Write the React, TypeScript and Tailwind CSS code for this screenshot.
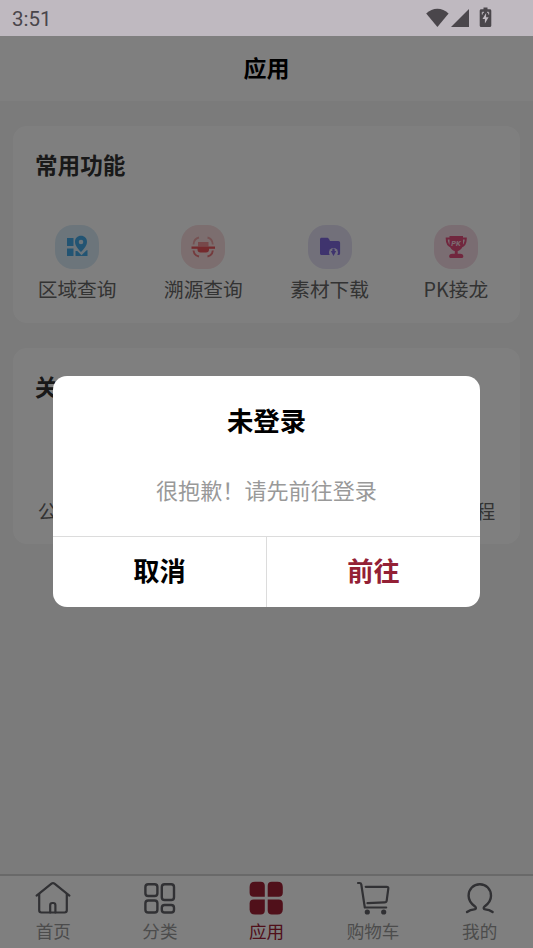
import type { ReactNode } from 'react';

interface Feature {
  label: string;
  tile: string;
  icon: ReactNode;
}

interface NavItem {
  label: string;
  icon: ReactNode;
  active?: boolean;
}

const MapIcon = () => (
  <svg className="h-11 w-11" viewBox="0 0 44 44" fill="#45a9e6">
    <path d="M12 13h6.500v8H12zM12 23.500h6.500V31H12z" />
    <path d="M20.500 26h1.800l4.200 4.200 4.800-4.600 1.200-.6V31h-12z" />
    <path
      fillRule="evenodd"
      d="M26 10.800c-3.500 0-6 2.600-6 5.900 0 4.100 3.200 7.100 6 10.400 2.800-3.300 6-6.300 6-10.400 0-3.300-2.500-5.900-6-5.900zm0 3.900a2.300 2.300 0 1 1 0 4.600 2.300 2.300 0 0 1 0-4.600z"
    />
  </svg>
);

const ScanIcon = () => (
  <svg className="h-11 w-11" viewBox="0 0 44 44" fill="none">
    <path
      d="M12.500 19.500c.3-3.600 2.300-6.300 5.500-7M26.500 12.500c3.200.7 5 3.400 5.300 7"
      stroke="#eda3a5"
      strokeWidth="1.800"
    />
    <path d="M17 17h10.500v4.500H17z" fill="#ee9194" />
    <path d="M16.500 23H28v1.500c0 2-1 3-3 3h-5.500c-2 0-3-1-3-3z" fill="#e8545b" />
    <path d="M10.500 21.500H34v2.300H10.500z" fill="#e8545b" />
    <path
      d="M12.500 25.500c.4 3.200 2.400 5.300 5.500 6M26.500 31.500c3.100-.7 5-2.800 5.300-6"
      stroke="#e8767b"
      strokeWidth="2"
    />
  </svg>
);

const FolderIcon = () => (
  <svg className="h-11 w-11" viewBox="0 0 44 44">
    <path
      d="M12 14.300c0-1 .6-1.600 1.600-1.600h5.200c1 0 1.700.4 2.200 1.300l1 1.900h8.200c1.200 0 1.900.7 1.900 1.900v10.700c0 .9-.6 1.500-1.500 1.500h-17c-1 0-1.600-.6-1.600-1.500z"
      fill="#7f69dd"
    />
    <circle cx="25.500" cy="27.500" r="4.500" fill="#e4e1f8" />
    <path
      d="M25.500 23.500c.9 0 1.200.5 1.200 1.200v1.400h1.500L25.500 31l-2.700-4.900h1.500v-1.400c0-.7.300-1.200 1.200-1.200z"
      fill="#7f69dd"
    />
  </svg>
);

const TrophyIcon = () => (
  <svg className="h-11 w-11" viewBox="0 0 44 44" fill="#e24e7d">
    <path
      d="M16.500 13.500h-3.800c0 5 1.400 7.700 5.300 8.100M28 13.500h3.800c0 5-1.400 7.700-5.300 8.100"
      fill="none"
      stroke="#e24e7d"
      strokeWidth="2"
    />
    <path d="M15.500 11h13.500v8c0 4-2.700 6.500-5.300 7v2.800h2.600c1.600 0 2.800.9 3 2.200.1 1-.4 2-1.200 2H16.400c-.8 0-1.300-1-1.200-2 .2-1.300 1.400-2.200 3-2.200h2.600V26c-2.600-.5-5.300-3-5.300-7z" />
    <text
      x="22"
      y="20.500"
      textAnchor="middle"
      fill="#f8dbe5"
      fontSize="7.500"
      fontStyle="italic"
      fontWeight="700"
      fontFamily="Roboto, sans-serif"
    >
      PK
    </text>
  </svg>
);

const HomeIcon = () => (
  <svg
    className="h-9 w-9"
    viewBox="0 0 36 36"
    fill="none"
    stroke="#626268"
    strokeWidth="2.200"
    strokeLinecap="round"
    strokeLinejoin="round"
  >
    <path d="M1.600 15.600 16.500 3.600c.9-.7 2.100-.7 3 0l14.900 12" />
    <path d="M4.200 14v16.300c0 1.500.8 2.200 2.200 2.200h23.200c1.400 0 2.200-.7 2.200-2.200V14" />
    <path d="M15.200 32.500v-7.300c0-1.400.8-2.200 2.200-2.200h.8c1.400 0 2.200.8 2.200 2.200v7.300" />
  </svg>
);

const CategoryIcon = () => (
  <svg className="h-9 w-9" viewBox="0 0 36 36" fill="none" stroke="#626268" strokeWidth="2.400">
    <rect x="3.400" y="4.200" width="12" height="11.800" rx="2.800" />
    <rect x="19.800" y="4.200" width="12.200" height="15.800" rx="2.800" />
    <rect x="3.400" y="20.500" width="12" height="12" rx="2.800" />
    <rect x="19.800" y="25" width="12.200" height="7.500" rx="2.800" />
  </svg>
);

const AppsIcon = () => (
  <svg className="h-9 w-9" viewBox="0 0 36 36" fill="#a02035">
    <path d="M7 1.700h5.800c2.600 0 4 1.400 4 4v11.100H5.600c-2.600 0-4-1.400-4-4V7c0-3.600 1.800-5.300 5.400-5.300z" />
    <path d="M29.500 1.700h-5.800c-2.600 0-4 1.400-4 4v11.100h11.100c2.600 0 4-1.400 4-4V7c0-3.600-1.800-5.300-5.300-5.300z" />
    <path d="M7 34.600h5.800c2.600 0 4-1.400 4-4V19.500H5.600c-2.600 0-4 1.400-4 4v5.800c0 3.600 1.800 5.300 5.400 5.300z" />
    <path d="M29.500 34.600h-5.800c-2.600 0-4-1.400-4-4V19.500h11.100c2.600 0 4 1.400 4 4v5.800c0 3.600-1.800 5.300-5.300 5.300z" />
  </svg>
);

const CartIcon = () => (
  <svg
    className="h-9 w-9"
    viewBox="0 0 36 36"
    fill="none"
    stroke="#626268"
    strokeWidth="2.200"
    strokeLinecap="round"
    strokeLinejoin="round"
  >
    <path d="M3 3h1.600c1 0 1.500.5 1.700 1.500L9.800 27.500h21.400" />
    <path d="M10.700 6.800h21c1.200 0 1.800.7 1.600 1.800l-1.600 12c-.2 1.200-.9 1.800-2 1.800l-17.200.8" />
    <circle cx="12.300" cy="32" r="1.500" fill="#626268" />
    <circle cx="28.700" cy="32" r="1.500" fill="#626268" />
  </svg>
);

const UserIcon = () => (
  <svg
    className="h-9 w-9"
    viewBox="0 0 36 36"
    fill="none"
    stroke="#626268"
    strokeWidth="2.400"
    strokeLinecap="round"
    strokeLinejoin="round"
  >
    <path d="M5 32c2.300-1.700 4.700-2.500 7.400-2.600 1.700-.1 2-1.900.6-3C9 23.600 6.600 20 6.600 15.700 6.600 9.200 11.400 4.200 17.800 4.200S29 9.200 29 15.700c0 4.300-2.400 7.900-6.400 10.700-1.400 1.100-1.100 2.900.6 3 2.700.1 5.100.9 7.400 2.600" />
  </svg>
);

const commonFeatures: Feature[] = [
  { label: '区域查询', tile: 'bg-[#d9ebf6]', icon: <MapIcon /> },
  { label: '溯源查询', tile: 'bg-[#f8dcde]', icon: <ScanIcon /> },
  { label: '素材下载', tile: 'bg-[#e4e1f5]', icon: <FolderIcon /> },
  { label: 'PK接龙', tile: 'bg-[#f5dae4]', icon: <TrophyIcon /> },
];

const aboutFeatures: Feature[] = [
  { label: '公司简介', tile: 'bg-[#d9ebf6]', icon: <MapIcon /> },
  { label: '使用教程', tile: 'bg-[#e4e1f5]', icon: <FolderIcon /> },
];

const navItems: NavItem[] = [
  { label: '首页', icon: <HomeIcon /> },
  { label: '分类', icon: <CategoryIcon /> },
  { label: '应用', icon: <AppsIcon />, active: true },
  { label: '购物车', icon: <CartIcon /> },
  { label: '我的', icon: <UserIcon /> },
];

function StatusBar() {
  return (
    <div className="flex h-9 shrink-0 items-center justify-between bg-[#bfb9c0] pr-[39px] pl-3 text-[#4a464b]">
      <span className="pt-[3px] font-[Roboto] text-[20.500px] leading-none">3:51</span>
      <svg className="h-9 w-[70px]" viewBox="0 0 70 36" fill="#4a464b">
        <path d="M2.200 13.600C8.500 7.200 18.300 7.200 24.600 13.600L13.400 27z" />
        <path d="M27 27 45 9v18z" />
        <path
          fillRule="evenodd"
          d="M59.500 7.500h4v1.700h2.300c.9 0 1.500.6 1.500 1.500v14.800c0 .9-.6 1.500-1.500 1.500h-8.600c-.9 0-1.500-.6-1.500-1.500V10.700c0-.9.600-1.500 1.500-1.500h2.300zm2.600 5.500-3.600 6h2.400v4.500l3.700-6.200h-2.500z"
        />
        <path d="M58.300 14.500v-2.200h1.700M64.700 14.500v-2.200H63" fill="none" stroke="#bfb9c0" />
      </svg>
    </div>
  );
}

function FeatureCard({ title, items }: { title: string; items: Feature[] }) {
  return (
    <section className="h-[196.500px] rounded-[14px] bg-white pt-[23px]">
      <h2 className="pl-[22px] text-[22.600px] leading-8 font-bold text-[#333333]">{title}</h2>
      <div className="mt-11 flex justify-between px-px">
        {items.map((item) => (
          <div key={item.label} className="flex w-1/4 flex-col items-center">
            <div className={`h-11 w-11 rounded-[18px] ${item.tile}`}>{item.icon}</div>
            <span className="mt-1.5 text-[19.700px] leading-7 text-[#666666]">{item.label}</span>
          </div>
        ))}
      </div>
    </section>
  );
}

function LoginDialog() {
  return (
    <div className="mt-[340px] flex h-[231px] w-[427px] flex-col overflow-hidden rounded-[14px] bg-white text-center">
      <h3 className="pt-[25px] text-[26.400px] leading-[38px] font-bold text-black">未登录</h3>
      <p className="mt-8 text-[22.100px] leading-9 text-[#999999]">很抱歉！请先前往登录</p>
      <div className="mt-auto flex h-[71px] border-t border-[#dcdcdc] text-[26.200px] font-bold">
        <button className="flex-1 border-r border-[#dcdcdc] pb-0.5 text-black">取消</button>
        <button className="flex-1 pb-0.5 text-[#932035]">前往</button>
      </div>
    </div>
  );
}

export default function App() {
  return (
    <div className="relative flex h-[948px] w-[533px] flex-col overflow-hidden bg-[#f6f6f6] font-['Noto_Sans_CJK_SC',sans-serif]">
      <StatusBar />
      <header className="flex h-[65px] shrink-0 items-center justify-center bg-white pb-0.5 text-[23px] font-bold text-black">
        应用
      </header>

      <main className="flex flex-1 flex-col gap-[25px] px-[13px] pt-[25px]">
        <FeatureCard title="常用功能" items={commonFeatures} />
        <FeatureCard title="关于" items={aboutFeatures} />
      </main>

      <nav className="flex h-[74px] shrink-0 border-t-2 border-[#d2d2d2] bg-white pt-1">
        {navItems.map((item) => (
          <div key={item.label} className="flex flex-1 flex-col items-center">
            {item.icon}
            <span
              className={`mt-[3px] text-[17.600px] leading-6 ${item.active ? 'text-[#a02035]' : 'text-[#999999]'}`}
            >
              {item.label}
            </span>
          </div>
        ))}
      </nav>

      {/* Modal mask, starts under the status bar */}
      <div className="absolute inset-x-0 top-9 bottom-0 flex items-start justify-center bg-black/50">
        <LoginDialog />
      </div>
    </div>
  );
}
